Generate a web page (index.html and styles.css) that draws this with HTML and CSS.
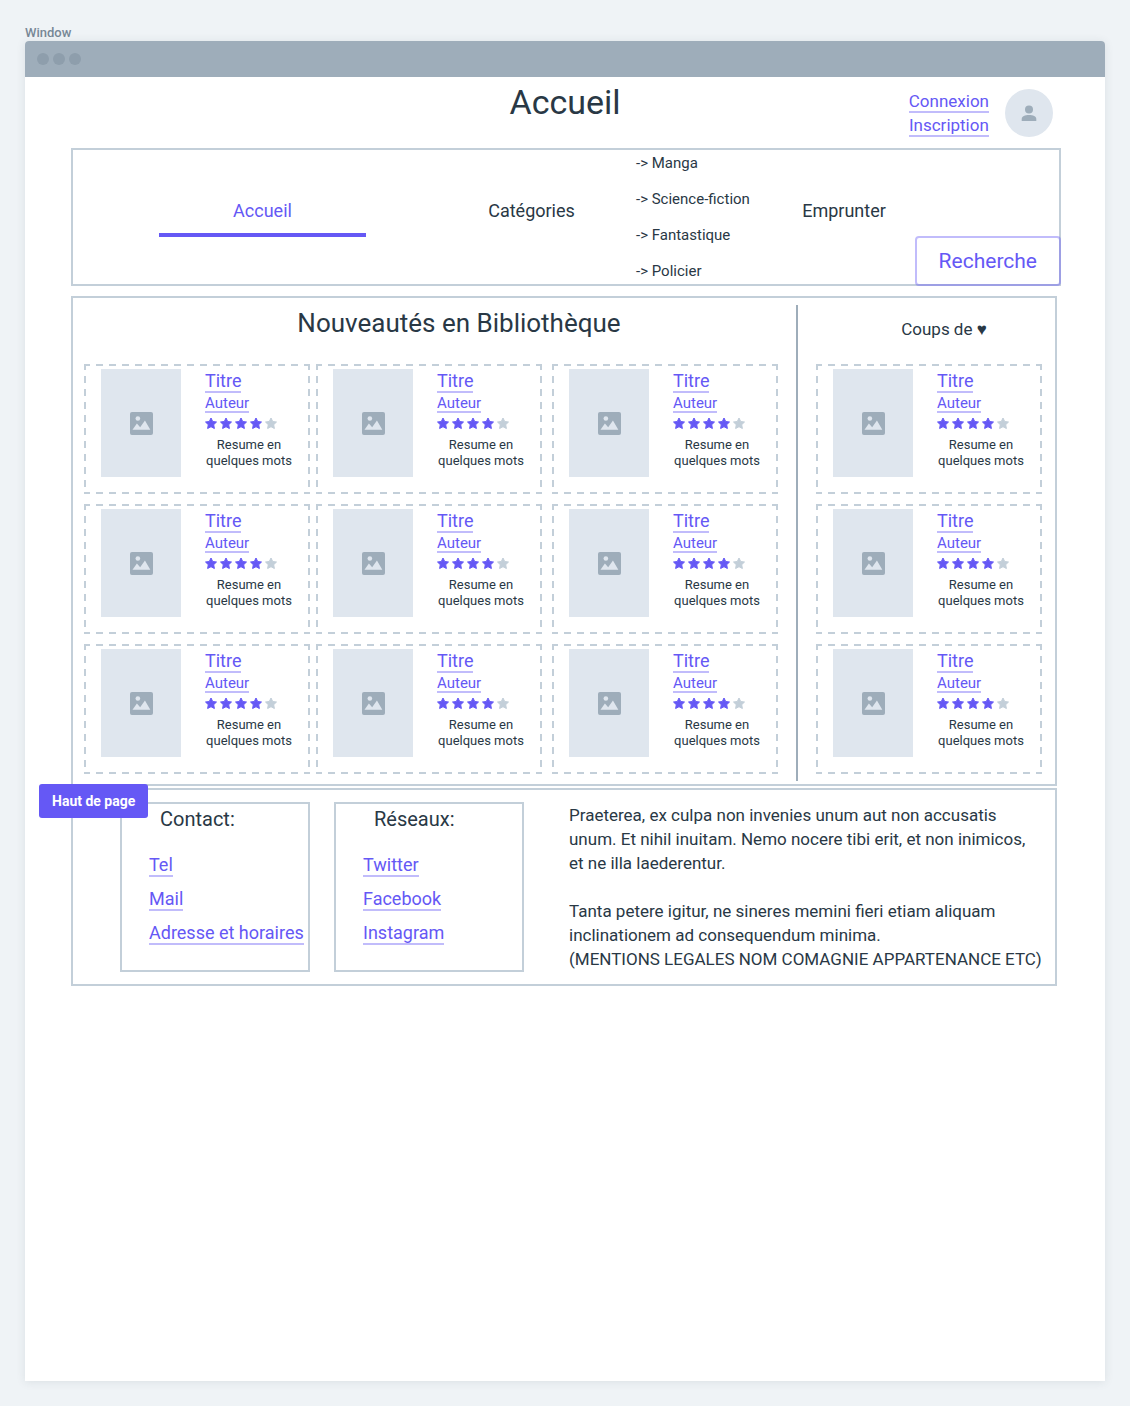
FILE: index.html
```html
<!DOCTYPE html>
<html lang="fr">
<head>
<meta charset="utf-8">
<meta name="viewport" content="width=device-width, initial-scale=1">
<title>Accueil</title>
<link rel="stylesheet" href="styles.css">
</head>
<body>
<p class="caption">Window</p>
<div class="window">
  <div class="titlebar"><span class="dot"></span><span class="dot"></span><span class="dot"></span></div>

  <header class="header">
    <h1 class="page-title">Accueil</h1>
    <div class="user">
      <div class="user-links">
        <a class="link" href="#connexion">Connexion</a>
        <a class="link" href="#inscription">Inscription</a>
      </div>
      <span class="avatar">
        <svg width="16" height="16" viewBox="0 0 16 16" aria-hidden="true"><circle cx="8" cy="4.400" r="4"/><path d="M.7 16v-2C.7 11.400 4 10 8 10s7.300 1.400 7.300 4v2z"/></svg>
      </span>
    </div>
  </header>

  <nav class="nav">
    <a class="tab tab-active" href="#accueil">Accueil</a>
    <a class="tab tab-categories" href="#categories">Catégories</a>
    <ul class="categories">
      <li>-&gt; Manga</li>
      <li>-&gt; Science-fiction</li>
      <li>-&gt; Fantastique</li>
      <li>-&gt; Policier</li>
    </ul>
    <a class="tab" href="#emprunter">Emprunter</a>
    <button class="search" type="button">Recherche</button>
  </nav>

  <main class="main">
    <section class="news">
      <h2 class="news-title">Nouveautés en Bibliothèque</h2>
      <div class="news-grid" data-books="9"></div>
    </section>
    <section class="picks">
      <h2 class="picks-title">Coups de ♥</h2>
      <div class="picks-grid" data-books="3"></div>
    </section>
  </main>

  <footer class="footer">
    <button class="to-top" type="button">Haut de page</button>
    <section class="box">
      <h3 class="box-title">Contact:</h3>
      <a class="link" href="#tel">Tel</a>
      <a class="link" href="#mail">Mail</a>
      <a class="link" href="#adresse">Adresse et horaires</a>
    </section>
    <section class="box">
      <h3 class="box-title">Réseaux:</h3>
      <a class="link" href="#twitter">Twitter</a>
      <a class="link" href="#facebook">Facebook</a>
      <a class="link" href="#instagram">Instagram</a>
    </section>
    <div class="legal">
      <p>Praeterea, ex culpa non invenies unum aut non accusatis<br>unum. Et nihil inuitam. Nemo nocere tibi erit, et non inimicos,<br>et ne illa laederentur.</p>
      <p>Tanta petere igitur, ne sineres memini fieri etiam aliquam<br>inclinationem ad consequendum minima.<br>(MENTIONS LEGALES NOM COMAGNIE APPARTENANCE ETC)</p>
    </div>
  </footer>
</div>

<template id="book">
  <article class="book">
    <div class="cover">
      <svg width="23" height="23" viewBox="0 0 24 24" aria-hidden="true"><rect width="24" height="24" rx="2" fill="#9eadba"/><circle cx="8.200" cy="6.800" r="2.400" fill="#dfe6ee"/><path d="M2.600 18.600l4.600-6.600 3.400 3.800 5-7 5.600 9.800z" fill="#dfe6ee"/></svg>
    </div>
    <div class="info">
      <a class="link" href="#titre">Titre</a>
      <a class="link link-small" href="#auteur">Auteur</a>
      <svg class="stars" width="73" height="13" viewBox="0 0 73 13" role="img" aria-label="4 sur 5">
        <g stroke-width="1" stroke-linejoin="round">
          <path class="star" d="M6 1l1.700 3.500 3.800.5-2.800 2.700.7 3.800L6 9.700l-3.400 1.800.7-3.800L.5 5l3.800-.5z"/>
          <path class="star" transform="translate(15)" d="M6 1l1.700 3.500 3.800.5-2.800 2.700.7 3.800L6 9.700l-3.400 1.800.7-3.800L.5 5l3.800-.5z"/>
          <path class="star" transform="translate(30)" d="M6 1l1.700 3.500 3.800.5-2.800 2.700.7 3.800L6 9.700l-3.400 1.800.7-3.800L.5 5l3.800-.5z"/>
          <path class="star" transform="translate(45)" d="M6 1l1.700 3.500 3.800.5-2.800 2.700.7 3.800L6 9.700l-3.400 1.800.7-3.800L.5 5l3.800-.5z"/>
          <path class="star star-off" transform="translate(60)" d="M6 1l1.700 3.500 3.800.5-2.800 2.700.7 3.800L6 9.700l-3.400 1.800.7-3.800L.5 5l3.800-.5z"/>
        </g>
      </svg>
      <p class="summary">Resume en<br>quelques mots</p>
    </div>
  </article>
</template>
<script src="books.js"></script>
</body>
</html>
```

FILE: styles.css
```css
* { box-sizing: border-box; margin: 0; padding: 0; }

body {
  min-height: 100vh;
  display: flex;
  flex-direction: column;
  padding: 25px;
  background: #eff3f6;
  color: #293845;
  font-family: Roboto, "Liberation Sans", sans-serif;
  font-size: 18px;
  line-height: 24px;
}

h1, h2, h3 { font-weight: 400; }
ul { list-style: none; }
button { font-family: inherit; cursor: pointer; }

.caption { font-size: 13px; line-height: 16px; font-weight: 500; color: #788896; }

.window {
  flex: 1;
  background: #fff;
  border-radius: 4px 4px 0 0;
  box-shadow: 0 1px 10px rgba(41, 56, 69, .1);
}
.titlebar {
  display: flex;
  align-items: center;
  gap: 4px;
  height: 36px;
  padding-left: 12px;
  background: #9eadba;
  border-radius: 4px 4px 0 0;
}
.dot { width: 12px; height: 12px; border-radius: 50%; background: #8e9eac; }

.header {
  display: grid;
  grid-template-columns: 1fr auto 1fr;
  min-height: 71px;
}
.page-title { grid-column: 2; font-size: 34px; line-height: 50px; }
.user {
  display: flex;
  justify-content: flex-end;
  gap: 16px;
  padding: 12px 52px 0 0;
  font-size: 17px;
}
.user-links { display: flex; flex-direction: column; align-items: center; }
.avatar {
  display: flex;
  align-items: center;
  justify-content: center;
  width: 48px;
  height: 48px;
  border-radius: 50%;
  background: #dfe6ee;
  fill: #9eadba;
}

.link {
  padding-top: 2px;
  color: #6558f5;
  text-decoration: none;
  line-height: 20px;
  border-bottom: 2px solid #c1bcfb;
}
.link-small { font-size: 15px; line-height: 16px; }

.nav {
  position: relative;
  display: grid;
  grid-template-columns: 207fr 61fr 209fr 136fr 144fr 143fr;
  align-items: center;
  margin: 0 44px 10px 46px;
  padding: 4px 0 4px 86px;
  border: 2px solid #c3cfd9;
}
.tab {
  margin-top: 2px;
  padding-bottom: 10px;
  border-bottom: 4px solid transparent;
  color: inherit;
  text-align: center;
  text-decoration: none;
}
.tab-active { color: #6558f5; border-color: #6558f5; }
.tab-categories { grid-column: 3; }
.categories { display: grid; gap: 18px; font-size: 15px; line-height: 18px; white-space: nowrap; }
.search {
  position: absolute;
  right: -2px;
  bottom: -2px;
  padding: 0 22px;
  border: 2px solid rgba(101, 88, 245, .4);
  border-radius: 4px;
  background: none;
  color: #6558f5;
  font-size: 21px;
  line-height: 46px;
}

.main {
  display: grid;
  grid-template-columns: 723fr 259fr;
  margin: 0 48px 2px 46px;
  border: 2px solid #c3cfd9;
}
.news { padding: 0 18px 10px 11px; }
.picks { position: relative; padding: 0 13px 10px 20px; }
.picks::before {
  content: "";
  position: absolute;
  inset: 7px auto 3px 0;
  width: 2px;
  background: #9eadba;
}
.news-title { padding: 0 0 16px 56px; font-size: 26px; line-height: 50px; text-align: center; }
.picks-title { padding: 0 0 4px 30px; font-size: 17px; line-height: 62px; text-align: center; }
.news-grid { display: grid; grid-template-columns: 226fr 226fr 230fr; gap: 10px 6px; }
.news-grid .book:nth-child(3n) { margin-left: 4px; }
.picks-grid { display: grid; gap: 10px; }

.book {
  --across: repeating-linear-gradient(90deg, #c3cfd9 0 6px, transparent 6px 12px, #c3cfd9 12px 13px);
  --down: repeating-linear-gradient(#c3cfd9 0 6px, transparent 6px 12px, #c3cfd9 12px 13px);
  display: flex;
  gap: 24px;
  min-height: 130px;
  padding: 5px 0 0 17px;
  background:
    var(--across) top / 100% 2px no-repeat,
    var(--across) bottom / 100% 2px no-repeat,
    var(--down) left / 2px 100% no-repeat,
    var(--down) right / 2px 100% no-repeat;
}
.cover {
  display: flex;
  align-items: center;
  justify-content: center;
  width: 80px;
  height: 108px;
  background: #dfe6ee;
}
.info { display: flex; flex-direction: column; align-items: flex-start; }
.stars { margin: 4px 0 7px; }
.star { fill: #6558f5; stroke: #6558f5; }
.star-off { fill: #c3cfd9; stroke: #c3cfd9; }
.summary { width: 88px; font-size: 13px; line-height: 16px; text-align: center; white-space: nowrap; }

.footer {
  position: relative;
  display: flex;
  align-items: flex-start;
  gap: 24px;
  margin: 0 48px 0 46px;
  padding: 12px 0 12px 47px;
  border: 2px solid #c3cfd9;
}
.to-top {
  position: absolute;
  left: -34px;
  top: -6px;
  padding: 0 13px;
  border: 0;
  border-radius: 3px;
  background: #6558f5;
  color: #fff;
  font-size: 14px;
  font-weight: 700;
  line-height: 34px;
}
.box {
  flex: 0 0 190px;
  display: flex;
  flex-direction: column;
  align-items: flex-start;
  gap: 10px;
  padding: 0 0 25px 27px;
  border: 2px solid #c3cfd9;
  white-space: nowrap;
}
.box-title { padding: 0 0 9px 11px; font-size: 20px; line-height: 30px; }
.legal { display: grid; gap: 24px; padding: 1px 0 0 21px; font-size: 17px; }
```

FILE: books.js
```js
const template = document.getElementById("book");
document.querySelectorAll("[data-books]").forEach((grid) => {
  for (let i = 0; i < Number(grid.dataset.books); i++) {
    grid.append(template.content.cloneNode(true));
  }
});
```
